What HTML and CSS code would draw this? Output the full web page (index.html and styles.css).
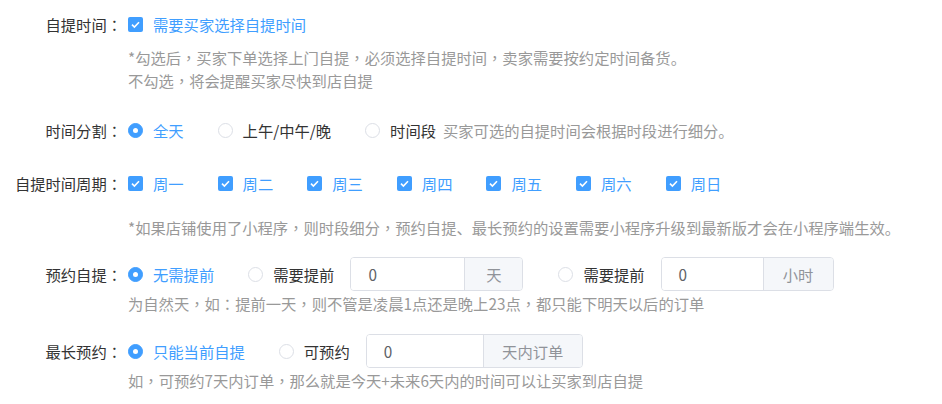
FILE: index.html
```html
<!DOCTYPE html>
<html lang="zh-CN">
<head>
<meta charset="utf-8">
<title>自提时间设置</title>
<link rel="stylesheet" href="styles.css">
</head>
<body>
<div class="form">
  <div class="item">
    <div class="label">自提时间<span class="colon" lang="zh-TW">：</span></div>
    <div class="content">
      <div class="line">
        <span class="opt on"><span class="cbox"><svg viewBox="0 0 15 15" width="15" height="15"><rect width="15" height="15" rx="2" fill="#409eff"/><polyline points="4,7.6 6.4,10 11,5.2" fill="none" stroke="#fff" stroke-width="1.6"/></svg></span><span class="text">需要买家选择自提时间</span></span>
      </div>
      <div class="hint hint-first">*勾选后<span class="p" lang="zh-TW">，</span>买家下单选择上门自提<span class="p" lang="zh-TW">，</span>必须选择自提时间<span class="p" lang="zh-TW">，</span>卖家需要按约定时间备货。<br>不勾选<span class="p" lang="zh-TW">，</span>将会提醒买家尽快到店自提</div>
    </div>
  </div>

  <div class="item item-2">
    <div class="label">时间分割<span class="colon" lang="zh-TW">：</span></div>
    <div class="content">
      <div class="line">
        <span class="opt on"><span class="radio checked"></span><span class="text">全天</span></span>
        <span class="opt"><span class="radio"></span><span class="text">上午/中午/晚</span></span>
        <span class="opt tight"><span class="radio"></span><span class="text">时间段</span><span class="inline-hint">买家可选的自提时间会根据时段进行细分。</span></span>
      </div>
    </div>
  </div>

  <div class="item item-3">
    <div class="label">自提时间周期<span class="colon" lang="zh-TW">：</span></div>
    <div class="content">
      <div class="line">
        <span class="opt on"><span class="cbox"><svg viewBox="0 0 15 15" width="15" height="15"><rect width="15" height="15" rx="2" fill="#409eff"/><polyline points="4,7.6 6.4,10 11,5.2" fill="none" stroke="#fff" stroke-width="1.6"/></svg></span><span class="text">周一</span></span>
        <span class="opt on"><span class="cbox"><svg viewBox="0 0 15 15" width="15" height="15"><rect width="15" height="15" rx="2" fill="#409eff"/><polyline points="4,7.6 6.4,10 11,5.2" fill="none" stroke="#fff" stroke-width="1.6"/></svg></span><span class="text">周二</span></span>
        <span class="opt on"><span class="cbox"><svg viewBox="0 0 15 15" width="15" height="15"><rect width="15" height="15" rx="2" fill="#409eff"/><polyline points="4,7.6 6.4,10 11,5.2" fill="none" stroke="#fff" stroke-width="1.6"/></svg></span><span class="text">周三</span></span>
        <span class="opt on"><span class="cbox"><svg viewBox="0 0 15 15" width="15" height="15"><rect width="15" height="15" rx="2" fill="#409eff"/><polyline points="4,7.6 6.4,10 11,5.2" fill="none" stroke="#fff" stroke-width="1.6"/></svg></span><span class="text">周四</span></span>
        <span class="opt on"><span class="cbox"><svg viewBox="0 0 15 15" width="15" height="15"><rect width="15" height="15" rx="2" fill="#409eff"/><polyline points="4,7.6 6.4,10 11,5.2" fill="none" stroke="#fff" stroke-width="1.6"/></svg></span><span class="text">周五</span></span>
        <span class="opt on"><span class="cbox"><svg viewBox="0 0 15 15" width="15" height="15"><rect width="15" height="15" rx="2" fill="#409eff"/><polyline points="4,7.6 6.4,10 11,5.2" fill="none" stroke="#fff" stroke-width="1.6"/></svg></span><span class="text">周六</span></span>
        <span class="opt on"><span class="cbox"><svg viewBox="0 0 15 15" width="15" height="15"><rect width="15" height="15" rx="2" fill="#409eff"/><polyline points="4,7.6 6.4,10 11,5.2" fill="none" stroke="#fff" stroke-width="1.6"/></svg></span><span class="text">周日</span></span>
      </div>
      <div class="hint hint-mid">*如果店铺使用了小程序<span class="p" lang="zh-TW">，</span>则时段细分<span class="p" lang="zh-TW">，</span>预约自提、最长预约的设置需要小程序升级到最新版才会在小程序端生效。</div>
    </div>
  </div>

  <div class="item item-4">
    <div class="label">预约自提<span class="colon" lang="zh-TW">：</span></div>
    <div class="content">
      <div class="line">
        <span class="opt on"><span class="radio checked"></span><span class="text">无需提前</span></span>
        <span class="opt tight"><span class="radio"></span><span class="text">需要提前</span></span>
        <span class="igroup g1"><span class="val">0</span><span class="addon">天</span></span>
        <span class="opt tight"><span class="radio"></span><span class="text">需要提前</span></span>
        <span class="igroup g2"><span class="val">0</span><span class="addon">小时</span></span>
      </div>
      <div class="hint hint-below">为自然天<span class="p" lang="zh-TW">，</span>如<span class="p" lang="zh-TW">：</span>提前一天<span class="p" lang="zh-TW">，</span>则不管是凌晨1点还是晚上23点<span class="p" lang="zh-TW">，</span>都只能下明天以后的订单</div>
    </div>
  </div>

  <div class="item item-5">
    <div class="label">最长预约<span class="colon" lang="zh-TW">：</span></div>
    <div class="content">
      <div class="line">
        <span class="opt on"><span class="radio checked"></span><span class="text">只能当前自提</span></span>
        <span class="opt tight"><span class="radio"></span><span class="text">可预约</span></span>
        <span class="igroup g3"><span class="val">0</span><span class="addon">天内订单</span></span>
      </div>
      <div class="hint hint-below">如<span class="p" lang="zh-TW">，</span>可预约7天内订单<span class="p" lang="zh-TW">，</span>那么就是今天+未来6天内的时间可以让买家到店自提</div>
    </div>
  </div>
</div>
</body>
</html>
```

FILE: styles.css
```css
html, body {
  margin: 0;
  background: #fff;
}

body {
  padding-top: 7px;
  font-family: "Noto Sans CJK SC", "Liberation Sans", sans-serif;
  font-size: 15.3px;
  color: #333;
}

.colon,
.p {
  font-family: "Noto Sans CJK TC", "Noto Sans CJK SC", sans-serif;
}

.item {
  display: flex;
  align-items: flex-start;
}

.item-2 { margin-top: 21px; }
.item-3 { margin-top: 19px; }
.item-4 { margin-top: 18px; }
.item-5 { margin-top: 19px; }

.label {
  width: 122px;
  flex: none;
  text-align: right;
  line-height: 34px;
  white-space: nowrap;
  color: #333;
}

.content {
  margin-left: 6px;
}

.line {
  display: flex;
  align-items: center;
  height: 34px;
  white-space: nowrap;
}

.opt {
  display: flex;
  align-items: center;
  margin-right: 34px;
}

.opt.tight {
  margin-right: 0;
}

.opt .text {
  margin-left: 10px;
  line-height: 34px;
  color: #333;
}

.opt.on .text {
  color: #409eff;
}

.cbox {
  display: block;
  width: 15px;
  height: 15px;
}

.cbox svg {
  display: block;
}

.radio {
  display: block;
  box-sizing: border-box;
  width: 15px;
  height: 15px;
  border-radius: 50%;
  border: 1px solid #dcdfe6;
  background: #fff;
  position: relative;
}

.radio.checked {
  border-color: #409eff;
  background: #409eff;
}

.radio.checked::after {
  content: "";
  position: absolute;
  left: 50%;
  top: 50%;
  width: 5px;
  height: 5px;
  margin: -2.5px 0 0 -2.5px;
  border-radius: 50%;
  background: #fff;
}

.inline-hint {
  margin-left: 7px;
  color: #999;
}

.hint {
  color: #999;
  line-height: 23px;
  white-space: nowrap;
}

.hint-first { margin-top: 5px; }
.hint-mid { margin-top: 16px; }
.hint-below { margin-top: 1px; }

.igroup {
  display: flex;
  box-sizing: border-box;
  height: 34px;
  border: 1px solid #dcdfe6;
  border-radius: 4px;
  overflow: hidden;
  margin-left: 16px;
}

.igroup .val {
  display: flex;
  align-items: center;
  box-sizing: border-box;
  padding-left: 17px;
  color: #606266;
  background: #fff;
}

.igroup .addon {
  display: flex;
  align-items: center;
  justify-content: center;
  box-sizing: border-box;
  border-left: 1px solid #dcdfe6;
  background: #f5f7fa;
  color: #909399;
}

.g1 { margin-right: 35px; }
.g1 .val { width: 113px; }
.g1 .addon { width: 58px; }

.g2 .val { width: 101px; }
.g2 .addon { width: 70px; }

.g3 .val { width: 116px; }
.g3 .addon { width: 99px; }
```
